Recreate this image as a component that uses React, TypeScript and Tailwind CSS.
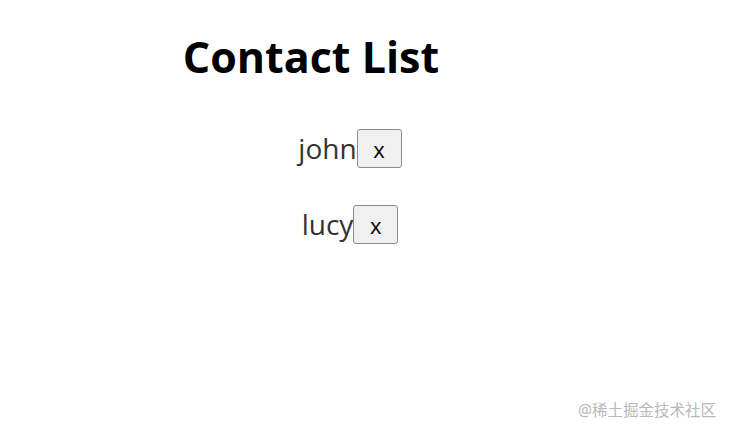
export default function App() {
  const contacts = ["john", "lucy"];
  return (
    <div className="relative h-[435px] w-[730px] bg-white text-[#222]" style={{ fontFamily: '"Open Sans", "Noto Sans", sans-serif' }}>
      <div className="flex w-[622px] justify-center pt-[25px]">
        <h1 className="text-[43px] font-bold leading-[64px] text-black">Contact List</h1>
      </div>
      <ul className="mt-[40px] flex w-[700px] flex-col items-center gap-[37px]">
        {contacts.map((name) => (
          <li key={name} className="flex items-center text-[28px] leading-[39px] text-[#333]">
            <span>{name}</span>
            <button className="h-[39px] w-[45px] rounded-[3px] border border-[#8a8a8a] bg-[#f0f0f0] text-[22px] leading-none text-black">
              x
            </button>
          </li>
        ))}
      </ul>
      <div
        className="absolute bottom-[13px] right-[14px] text-[15.5px] text-[#b8b8b8]"
        style={{ fontFamily: '"Noto Sans", "Noto Sans CJK SC", sans-serif' }}
      >
        @稀土掘金技术社区
      </div>
    </div>
  );
}
